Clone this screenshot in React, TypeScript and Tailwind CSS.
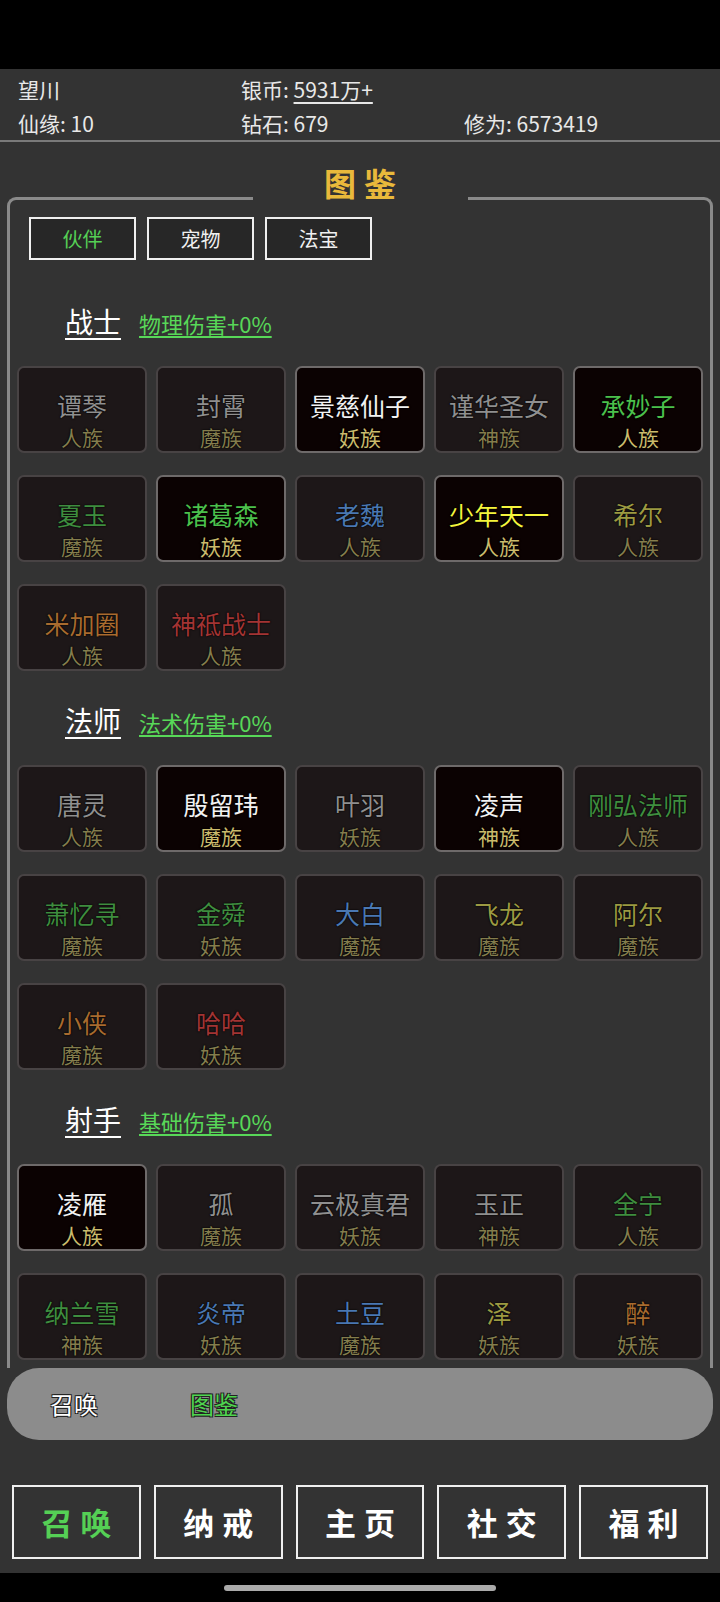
import React from 'react';

type Tone = 'gray' | 'white' | 'green' | 'greenHi' | 'blue' | 'olive' | 'yellow' | 'orange' | 'red';

interface Hero {
  name: string;
  race: string;
  tone: Tone;
  owned?: boolean;
}

// 名字颜色（已拥有的卡更亮）
const toneClass: Record<Tone, string> = {
  gray: 'text-[#8f8f8f]',
  white: 'text-[#f2f2f2]',
  green: 'text-[#3f8d3f]',
  greenHi: 'text-[#4cc04c]',
  blue: 'text-[#4a78b2]',
  olive: 'text-[#9c9a42]',
  yellow: 'text-[#f5f53c]',
  orange: 'text-[#a86b2f]',
  red: 'text-[#a23434]',
};

const sections: { title: string; bonus: string; heroes: Hero[] }[] = [
  {
    title: '战士',
    bonus: '物理伤害+0%',
    heroes: [
      { name: '谭琴', race: '人族', tone: 'gray' },
      { name: '封霄', race: '魔族', tone: 'gray' },
      { name: '景慈仙子', race: '妖族', tone: 'white', owned: true },
      { name: '谨华圣女', race: '神族', tone: 'gray' },
      { name: '承妙子', race: '人族', tone: 'greenHi', owned: true },
      { name: '夏玉', race: '魔族', tone: 'green' },
      { name: '诸葛森', race: '妖族', tone: 'greenHi', owned: true },
      { name: '老魏', race: '人族', tone: 'blue' },
      { name: '少年天一', race: '人族', tone: 'yellow', owned: true },
      { name: '希尔', race: '人族', tone: 'olive' },
      { name: '米加圈', race: '人族', tone: 'orange' },
      { name: '神祗战士', race: '人族', tone: 'red' },
    ],
  },
  {
    title: '法师',
    bonus: '法术伤害+0%',
    heroes: [
      { name: '唐灵', race: '人族', tone: 'gray' },
      { name: '殷留玮', race: '魔族', tone: 'white', owned: true },
      { name: '叶羽', race: '妖族', tone: 'gray' },
      { name: '凌声', race: '神族', tone: 'white', owned: true },
      { name: '刚弘法师', race: '人族', tone: 'green' },
      { name: '萧忆寻', race: '魔族', tone: 'green' },
      { name: '金舜', race: '妖族', tone: 'green' },
      { name: '大白', race: '魔族', tone: 'blue' },
      { name: '飞龙', race: '魔族', tone: 'olive' },
      { name: '阿尔', race: '魔族', tone: 'olive' },
      { name: '小侠', race: '魔族', tone: 'orange' },
      { name: '哈哈', race: '妖族', tone: 'red' },
    ],
  },
  {
    title: '射手',
    bonus: '基础伤害+0%',
    heroes: [
      { name: '凌雁', race: '人族', tone: 'white', owned: true },
      { name: '孤', race: '魔族', tone: 'gray' },
      { name: '云极真君', race: '妖族', tone: 'gray' },
      { name: '玉正', race: '神族', tone: 'gray' },
      { name: '全宁', race: '人族', tone: 'green' },
      { name: '纳兰雪', race: '神族', tone: 'green' },
      { name: '炎帝', race: '妖族', tone: 'blue' },
      { name: '土豆', race: '魔族', tone: 'blue' },
      { name: '泽', race: '妖族', tone: 'olive' },
      { name: '醉', race: '妖族', tone: 'orange' },
    ],
  },
];

const navItems = ['召唤', '纳戒', '主页', '社交', '福利'];

function HeroCard({ hero }: { hero: Hero }) {
  return (
    <div
      className={`h-[87px] rounded-[7px] border-2 flex flex-col items-center pt-[22px] [text-shadow:0_0_2px_#000,0_0_1px_#000] ${
        hero.owned ? 'bg-[#0b0202] border-[#6e6a6a]' : 'bg-[#1d1718] border-[#484344]'
      }`}
    >
      <div className={`text-[25px] leading-[31px] ${toneClass[hero.tone]}`}>{hero.name}</div>
      <div className={`text-[21px] leading-[30px] mt-[1px] ${hero.owned ? 'text-[#cbbb6c]' : 'text-[#847d4d]'}`}>
        {hero.race}
      </div>
    </div>
  );
}

export default function App() {
  return (
    <div className="w-[720px] h-[1602px] bg-[#333333] flex flex-col overflow-hidden font-['Noto_Sans_CJK_SC','Noto_Sans',sans-serif] text-[#e8e8e8]">
      {/* 状态栏 */}
      <div className="h-[69px] bg-black shrink-0" />

      {/* 玩家信息 */}
      <div className="pt-[3px] border-b-2 border-[#7a7a7a] text-[21px] shrink-0">
        <div className="h-[36px] flex items-center pl-[18px]">
          <div className="w-[223px]">望川</div>
          <div className="w-[223px]">
            银币: <span className="underline underline-offset-4">5931万+</span>
          </div>
        </div>
        <div className="h-[32px] flex items-center pl-[18px]">
          <div className="w-[223px]">仙缘: 10</div>
          <div className="w-[223px]">钻石: 679</div>
          <div>修为: 6573419</div>
        </div>
      </div>

      {/* 图鉴面板 */}
      <div className="px-[7px] shrink-0">
        <div className="flex h-[67px]">
          <div className="flex-1 mt-[55px] border-t-[3px] border-l-[3px] border-[#8a8a8a] rounded-tl-[9px]" />
          <div className="w-[215px] pt-[23px] text-center text-[32px] leading-[34px] font-bold text-[#e9b93b] tracking-[8px] pl-[8px]">
            图鉴
          </div>
          <div className="flex-1 mt-[55px] border-t-[3px] border-r-[3px] border-[#8a8a8a] rounded-tr-[9px]" />
        </div>

        <div className="border-x-[3px] border-[#8a8a8a]">
          <div className="h-[1159px] overflow-hidden">
            <div className="pt-[8px] pl-[19px] flex gap-[11px]">
              {['伙伴', '宠物', '法宝'].map((t, i) => (
                <div
                  key={t}
                  className={`w-[107px] h-[43px] border-2 border-[#f0f0f0] bg-[#272727] flex items-center justify-center text-[20px] ${
                    i === 0 ? 'text-[#55d055]' : 'text-[#f0f0f0]'
                  }`}
                >
                  {t}
                </div>
              ))}
            </div>

            {sections.map((s, si) => (
              <div key={s.title} className="px-[7px]">
                <div className={`h-[44px] flex items-baseline pl-[48px] ${si === 0 ? 'mt-[39px]' : 'mt-[27px]'}`}>
                  <span className="text-[28px] leading-[44px] text-white underline underline-offset-[5px]">{s.title}</span>
                  <span className="ml-[18px] text-[22px] text-[#58d858] underline underline-offset-[3px]">{s.bonus}</span>
                </div>
                <div className="grid grid-cols-5 gap-x-[9px] gap-y-[22px] mt-[23px]">
                  {s.heroes.map((h) => (
                    <HeroCard key={h.name} hero={h} />
                  ))}
                </div>
              </div>
            ))}
          </div>
        </div>

        {/* 底部子菜单 */}
        <div className="h-[72px] rounded-[32px] bg-[#8c8c8c] flex items-center pl-[43px] gap-[92px] text-[24px] [text-shadow:1px_1px_0_#222,-1px_-1px_0_#222,1px_-1px_0_#222,-1px_1px_0_#222]">
          <span className="text-white">召唤</span>
          <span className="text-[#4fd44f]">图鉴</span>
        </div>
      </div>

      {/* 底部导航 */}
      <div className="pt-[45px] pb-[14px] px-[12px] grid grid-cols-5 gap-[13px] shrink-0">
        {navItems.map((n, i) => (
          <div
            key={n}
            className={`h-[74px] border-2 border-[#f0f0f0] flex items-center justify-center text-[31px] font-bold tracking-[8px] pl-[8px] ${
              i === 0 ? 'text-[#55d055]' : 'text-white'
            }`}
          >
            {n}
          </div>
        ))}
      </div>

      <div className="flex-1 bg-black flex items-center justify-center">
        <div className="w-[272px] h-[6px] rounded-full bg-[#aaaaaa]" />
      </div>
    </div>
  );
}
